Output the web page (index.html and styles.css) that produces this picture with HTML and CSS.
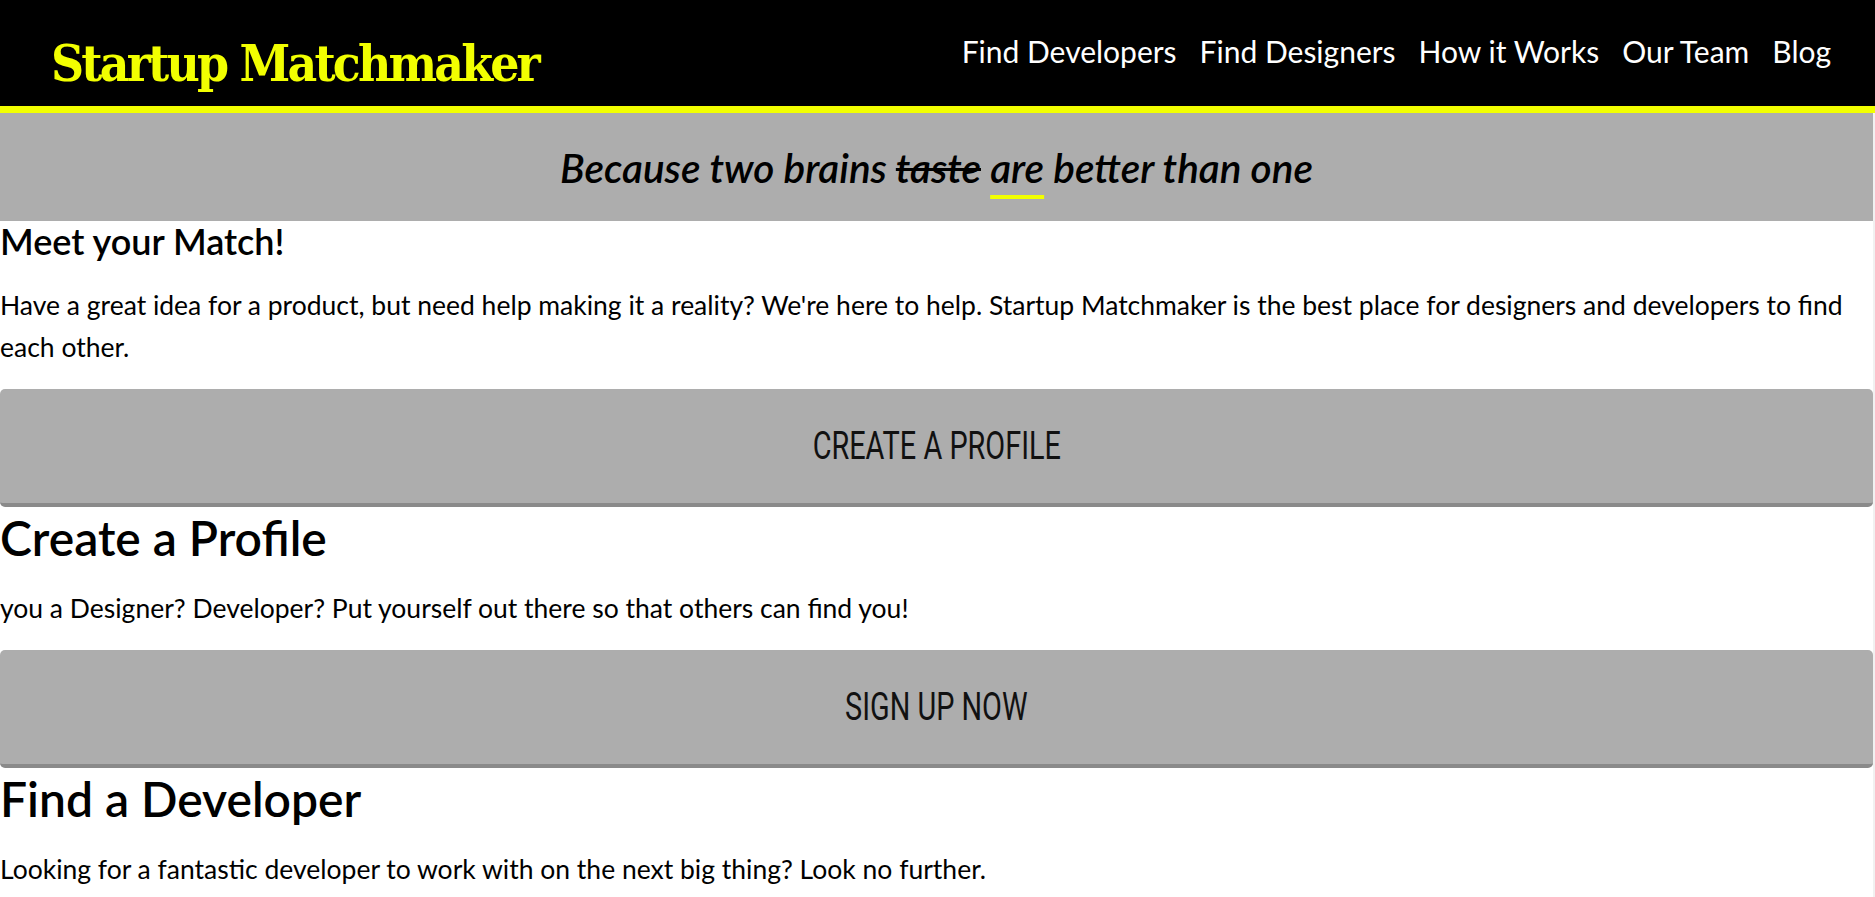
FILE: index.html
```html
<!DOCTYPE html>
<html lang="en">
<head>
<meta charset="utf-8">
<title>Startup Matchmaker</title>
<link rel="stylesheet" href="styles.css">
</head>
<body>
<header class="site-header">
  <h1 class="logo">Startup Matchmaker</h1>
  <nav class="main-nav">
    <a href="#">Find Developers</a>
    <a href="#">Find Designers</a>
    <a href="#">How it Works</a>
    <a href="#">Our Team</a>
    <a href="#">Blog</a>
  </nav>
</header>
<div class="page">
  <section class="tagline">
    <p>Because two brains <s>taste</s> <span class="hl">are</span> better than one</p>
  </section>
  <main class="content">
    <section class="intro">
      <h3>Meet your Match!</h3>
      <p>Have a great idea for a product, but need help making it a reality? We're here to help. Startup Matchmaker is the best place for designers and developers to find each other.</p>
      <a class="btn" href="#"><span class="btn-label">Create a Profile</span></a>
    </section>
    <section class="block">
      <h2>Create a Profile</h2>
      <p>you a Designer? Developer? Put yourself out there so that others can find you!</p>
      <a class="btn" href="#"><span class="btn-label">Sign up now</span></a>
    </section>
    <section class="block">
      <h2>Find a Developer</h2>
      <p>Looking for a fantastic developer to work with on the next big thing? Look no further.</p>
    </section>
  </main>
</div>
</body>
</html>
```
FILE: styles.css
```css
html {
  background: #f1f1f1;
}
body {
  margin: 0;
  font-family: Lato, "Open Sans", sans-serif;
  color: #000;
  background: #f1f1f1;
}
.site-header {
  height: 106px;
  background: #000;
  border-bottom: 7px solid #f2ff00;
  display: flex;
  align-items: center;
  justify-content: space-between;
  padding: 0 44px 0 51px;
}
.logo {
  margin: 0;
  font-family: "DejaVu Serif Condensed", "DejaVu Serif", serif;
  font-weight: bold;
  font-size: 51px;
  letter-spacing: -2.8px;
  color: #f2ff00;
  line-height: 1;
  padding-top: 20px;
}
.main-nav {
  display: flex;
  gap: 23px;
  padding-bottom: 4px;
}
.main-nav a {
  color: #fff;
  text-decoration: none;
  font-size: 30px;
}
.page {
  margin-right: 2px;
  background: #fff;
}
.tagline {
  background: #adadad;
  height: 108px;
  display: flex;
  align-items: center;
  justify-content: center;
}
.tagline p {
  margin: 0;
  font-style: italic;
  font-size: 40.5px;
  font-weight: 600;
}
.tagline s {
  text-decoration-thickness: 3px;
}
.hl {
  text-decoration: underline;
  text-decoration-color: #f2ff00;
  text-decoration-thickness: 4px;
  text-underline-offset: 12px;
  text-decoration-skip-ink: none;
}
.content {
  padding-bottom: 10px;
}
.content h3 {
  margin: 0;
  padding-top: 2px;
  font-size: 36px;
  line-height: 36px;
  font-weight: 600;
}
.content h2 {
  margin: 0;
  font-size: 48px;
  line-height: 48px;
  font-weight: 600;
}
.content p {
  margin: 25px 0 21px;
  font-size: 26.5px;
  line-height: 42px;
}
.btn {
  display: flex;
  align-items: center;
  justify-content: center;
  height: 114px;
  background: #adadad;
  border-bottom: 4px solid #8a8a8a;
  border-radius: 5px;
  color: #111;
  text-decoration: none;
  text-transform: uppercase;
  font-family: Roboto, "DejaVu Sans", sans-serif;
  font-size: 39px;
  margin-bottom: 7px;
}
.btn-label {
  display: inline-block;
  transform: scaleX(0.74);
}
```
